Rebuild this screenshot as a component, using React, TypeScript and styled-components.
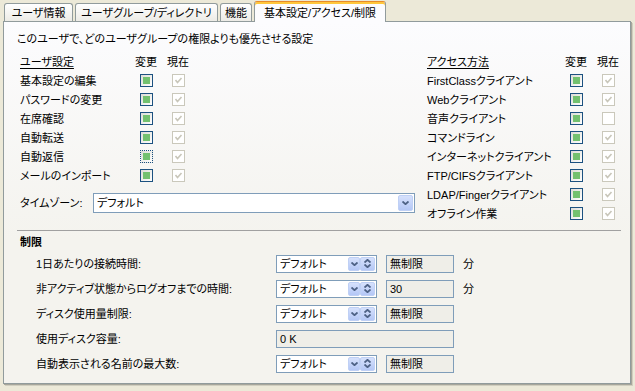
import React from 'react'
import styled, { createGlobalStyle, css } from 'styled-components'

const GlobalStyle = createGlobalStyle`
    html, body {
        margin: 0;
        padding: 0;
    }
    body {
        width: 635px;
        height: 391px;
        overflow: hidden;
        background: #ECE9D8;
    }
`

const DefaultFont = css`
    font-family: 'Liberation Sans', 'Noto Sans CJK JP', sans-serif;
    font-size: 11px;
    font-feature-settings: 'palt';
    line-height: 14px;
    color: #000000;
`

const Page = styled.div`
    ${DefaultFont}
    padding: 1px 0 0 3px;
    width: 628px;
`

const TabBar = styled.div`
    display: flex;
    align-items: flex-end;
    gap: 2px;
    height: 20px;
    padding-left: 1px;
`

const Tab = styled.div<{ $w: number; $active?: boolean }>`
    box-sizing: border-box;
    width: ${(p) => p.$w}px;
    height: 18px;
    display: flex;
    align-items: center;
    justify-content: center;
    white-space: nowrap;
    border: 1px solid #919B9C;
    border-bottom: none;
    border-radius: 3px 3px 0 0;
    background: linear-gradient(#FFFFFF, #ECEBE6);

    ${(p) =>
        p.$active &&
        css`
            position: relative;
            z-index: 1;
            height: 21px;
            margin-bottom: -1px;
            border-top: 1px solid #E68B2C;
            background: #FCFCFE;
            box-shadow: inset 0 2px 0 #FFC73C;
            padding-top: 1px;
        `}
`

const Panel = styled.div`
    box-sizing: border-box;
    height: 363px;
    border: 1px solid #919B9C;
    background: linear-gradient(#FCFCFE, #F4F3EE 60%);
    box-shadow: 1px 1px 0 #A7A69B, 2px 2px 0 #D0CEBF;
    padding: 10px 6px 0 13px;
`

const Intro = styled.div`
    white-space: nowrap;
`

const Columns = styled.div`
    display: flex;
    justify-content: space-between;
    margin: 9px 0 0 3px;
`

const LeftColumn = styled.div`
    display: flex;
    flex-direction: column;
`

const SettingsGrid = styled.div<{ $label: number }>`
    display: grid;
    grid-template-columns: ${(p) => p.$label}px 32px 32px;
    grid-template-rows: 16px;
    grid-auto-rows: 19px;
    align-items: center;
`

const HeadLabel = styled.span`
    align-self: start;
    text-decoration: underline;
    text-underline-offset: 2px;
    white-space: nowrap;
`

const HeadCell = styled.span`
    align-self: start;
    text-align: center;
`

const Label = styled.span`
    white-space: nowrap;
`

const Cell = styled.span`
    display: flex;
    justify-content: center;
`

const ChangeBox = styled.span<{ $focus?: boolean }>`
    box-sizing: border-box;
    width: 13px;
    height: 13px;
    display: flex;
    align-items: center;
    justify-content: center;
    border: 1px solid #1C5180;
    background: linear-gradient(135deg, #DCDCD7, #FFFFFF);

    &::after {
        content: '';
        width: 7px;
        height: 7px;
        background: #73C16F;
    }

    ${(p) =>
        p.$focus &&
        css`
            border-style: dotted;
            border-color: #000000;
            outline: 1px dotted #1C5180;
            outline-offset: -1px;
        `}
`

const CurrentBox = styled.span`
    box-sizing: border-box;
    width: 13px;
    height: 13px;
    display: flex;
    align-items: center;
    justify-content: center;
    border: 1px solid #CAC8BB;
    background: #FFFFFF;
`

const TimezoneRow = styled.div`
    display: flex;
    align-items: center;
    margin-top: 8px;
`

const TimezoneLabel = styled.span`
    width: 73px;
    white-space: nowrap;
`

const Combo = styled.div<{ $w: number; $h: number }>`
    box-sizing: border-box;
    width: ${(p) => p.$w}px;
    height: ${(p) => p.$h}px;
    display: flex;
    align-items: stretch;
    border: 1px solid #7F9DB9;
    background: #FFFFFF;
    padding: 1px;
`

const ComboText = styled.span`
    flex: 1;
    display: flex;
    align-items: center;
    padding-left: 2px;
    white-space: nowrap;
    overflow: hidden;
`

const ArrowButton = styled.span<{ $w: number }>`
    box-sizing: border-box;
    width: ${(p) => p.$w}px;
    display: flex;
    flex-direction: column;
    align-items: center;
    justify-content: center;
    gap: 1px;
    border: 1px solid #BFD0F5;
    border-radius: 2px;
    background: linear-gradient(#D6E1FC, #B4C7F6);
`

const Separator = styled.hr`
    margin: 7px 3px 0 0;
    border: none;
    border-top: 1px solid #A0A0A0;
    height: 0;
`

const LimitTitle = styled.div`
    font-weight: bold;
    margin: 4px 0 0 3px;
`

const LimitGrid = styled.div`
    display: grid;
    grid-template-columns: 231px 101px 68px auto;
    grid-auto-rows: 25px;
    column-gap: 9px;
    align-items: center;
    margin: 2px 0 0 19px;
`

const Field = styled.span<{ $span?: number }>`
    box-sizing: border-box;
    height: 18px;
    display: flex;
    align-items: center;
    padding-left: 3px;
    border: 1px solid #7F9DB9;
    background: #EFEEE8;
    white-space: nowrap;
    grid-column: span ${(p) => p.$span ?? 1};
`

const Unit = styled.span``

const Chevron = ({ up }: { up?: boolean }) => (
    <svg width="7" height="4" viewBox="0 0 7 4">
        <polyline
            points={up ? '0.5,3.5 3.5,0.8 6.5,3.5' : '0.5,0.5 3.5,3.2 6.5,0.5'}
            fill="none"
            stroke="#4D6185"
            strokeWidth="1.8"
        />
    </svg>
)

const CheckMark = () => (
    <svg width="9" height="9" viewBox="0 0 9 9">
        <polyline points="1.5,4 3.5,6.5 7.5,2" fill="none" stroke="#C8C6B9" strokeWidth="1.6" />
    </svg>
)

const Select = ({ w, h, spin }: { w: number; h: number; spin?: boolean }) => (
    <Combo $w={w} $h={h}>
        <ComboText>デフォルト</ComboText>
        <ArrowButton $w={spin ? 12 : 15}>
            <Chevron />
        </ArrowButton>
        {spin && (
            <ArrowButton $w={15}>
                <Chevron up />
                <Chevron />
            </ArrowButton>
        )}
    </Combo>
)

const userSettings = [
    { label: '基本設定の編集' },
    { label: 'パスワードの変更' },
    { label: '在席確認' },
    { label: '自動転送' },
    { label: '自動返信', focus: true },
    { label: 'メールのインポート' },
]

const accessMethods = [
    { label: 'FirstClassクライアント', current: true },
    { label: 'Webクライアント', current: true },
    { label: '音声クライアント', current: false },
    { label: 'コマンドライン', current: true },
    { label: 'インターネットクライアント', current: true },
    { label: 'FTP/CIFSクライアント', current: true },
    { label: 'LDAP/Fingerクライアント', current: true },
    { label: 'オフライン作業', current: true },
]

type Limit = { label: string; select: boolean; value: string; unit?: string }

const limits: Limit[] = [
    { label: '1日あたりの接続時間:', select: true, value: '無制限', unit: '分' },
    { label: '非アクティブ状態からログオフまでの時間:', select: true, value: '30', unit: '分' },
    { label: 'ディスク使用量制限:', select: true, value: '無制限' },
    { label: '使用ディスク容量:', select: false, value: '0 K' },
    { label: '自動表示される名前の最大数:', select: true, value: '無制限' },
]

const tabs = [
    { label: 'ユーザ情報', w: 69 },
    { label: 'ユーザグループ/ディレクトリ', w: 143 },
    { label: '機能', w: 32 },
    { label: '基本設定/アクセス/制限', w: 132, active: true },
]

export default function App() {
    return (
        <>
            <GlobalStyle />
            <Page>
                <TabBar>
                    {tabs.map((t) => (
                        <Tab key={t.label} $w={t.w} $active={t.active}>
                            {t.label}
                        </Tab>
                    ))}
                </TabBar>
                <Panel>
                    <Intro>このユーザで、どのユーザグループの権限よりも優先させる設定</Intro>
                    <Columns>
                        <LeftColumn>
                            <SettingsGrid $label={110}>
                                <HeadLabel>ユーザ設定</HeadLabel>
                                <HeadCell>変更</HeadCell>
                                <HeadCell>現在</HeadCell>
                                {userSettings.map((s) => (
                                    <React.Fragment key={s.label}>
                                        <Label>{s.label}</Label>
                                        <Cell>
                                            <ChangeBox $focus={s.focus} />
                                        </Cell>
                                        <Cell>
                                            <CurrentBox>
                                                <CheckMark />
                                            </CurrentBox>
                                        </Cell>
                                    </React.Fragment>
                                ))}
                            </SettingsGrid>
                            <TimezoneRow>
                                <TimezoneLabel>タイムゾーン:</TimezoneLabel>
                                <Select w={322} h={20} />
                            </TimezoneRow>
                        </LeftColumn>
                        <SettingsGrid $label={133}>
                            <HeadLabel>アクセス方法</HeadLabel>
                            <HeadCell>変更</HeadCell>
                            <HeadCell>現在</HeadCell>
                            {accessMethods.map((m) => (
                                <React.Fragment key={m.label}>
                                    <Label>{m.label}</Label>
                                    <Cell>
                                        <ChangeBox />
                                    </Cell>
                                    <Cell>
                                        <CurrentBox>{m.current && <CheckMark />}</CurrentBox>
                                    </Cell>
                                </React.Fragment>
                            ))}
                        </SettingsGrid>
                    </Columns>
                    <Separator />
                    <LimitTitle>制限</LimitTitle>
                    <LimitGrid>
                        {limits.map((l) => (
                            <React.Fragment key={l.label}>
                                <Label>{l.label}</Label>
                                {l.select ? (
                                    <>
                                        <Select w={101} h={18} spin />
                                        <Field>{l.value}</Field>
                                    </>
                                ) : (
                                    <Field $span={2}>{l.value}</Field>
                                )}
                                <Unit>{l.unit ?? ''}</Unit>
                            </React.Fragment>
                        ))}
                    </LimitGrid>
                </Panel>
            </Page>
        </>
    )
}
